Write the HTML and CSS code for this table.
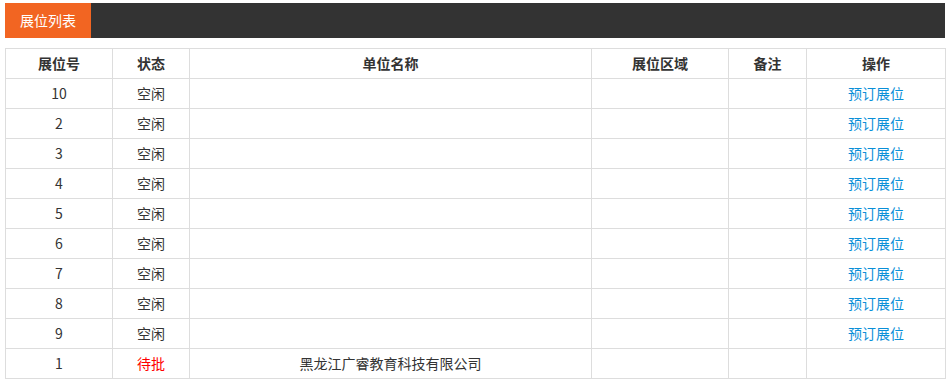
FILE: index.html
```html
<!DOCTYPE html>
<html lang="zh">
<head>
<meta charset="utf-8">
<title>展位列表</title>
<link rel="stylesheet" href="styles.css">
</head>
<body>
<div class="page">
  <div class="titlebar"><span class="tab">展位列表</span></div>
  <table class="booths">
    <colgroup>
      <col class="c1"><col class="c2"><col class="c3"><col class="c4"><col class="c5"><col class="c6">
    </colgroup>
    <thead>
      <tr><th>展位号</th><th>状态</th><th>单位名称</th><th>展位区域</th><th>备注</th><th>操作</th></tr>
    </thead>
    <tbody>
      <tr><td>10</td><td>空闲</td><td></td><td></td><td></td><td><a class="act" href="#">预订展位</a></td></tr>
      <tr><td>2</td><td>空闲</td><td></td><td></td><td></td><td><a class="act" href="#">预订展位</a></td></tr>
      <tr><td>3</td><td>空闲</td><td></td><td></td><td></td><td><a class="act" href="#">预订展位</a></td></tr>
      <tr><td>4</td><td>空闲</td><td></td><td></td><td></td><td><a class="act" href="#">预订展位</a></td></tr>
      <tr><td>5</td><td>空闲</td><td></td><td></td><td></td><td><a class="act" href="#">预订展位</a></td></tr>
      <tr><td>6</td><td>空闲</td><td></td><td></td><td></td><td><a class="act" href="#">预订展位</a></td></tr>
      <tr><td>7</td><td>空闲</td><td></td><td></td><td></td><td><a class="act" href="#">预订展位</a></td></tr>
      <tr><td>8</td><td>空闲</td><td></td><td></td><td></td><td><a class="act" href="#">预订展位</a></td></tr>
      <tr><td>9</td><td>空闲</td><td></td><td></td><td></td><td><a class="act" href="#">预订展位</a></td></tr>
      <tr><td>1</td><td class="pending">待批</td><td>黑龙江广睿教育科技有限公司</td><td></td><td></td><td></td></tr>
    </tbody>
  </table>
</div>
</body>
</html>
```
FILE: styles.css
```css
html, body {
  margin: 0;
  padding: 0;
  background: #fff;
}
body {
  font-family: "Noto Sans CJK SC", "Noto Sans", "Liberation Sans", sans-serif;
  font-size: 14px;
  color: #333;
}
.page {
  padding: 3px 3px 0 5px;
  width: 940px;
}
.titlebar {
  display: flex;
  height: 35px;
  background: #333;
}
.tab {
  display: flex;
  align-items: center;
  justify-content: center;
  width: 86px;
  padding-bottom: 2px;
  box-sizing: border-box;
  background: #f26522;
  color: #fff;
  font-size: 14px;
}
.booths {
  margin-top: 10px;
  width: 940px;
  border-collapse: collapse;
  table-layout: fixed;
}
.c1 { width: 107px; }
.c2 { width: 77px; }
.c3 { width: 402px; }
.c4 { width: 137px; }
.c5 { width: 78px; }
.c6 { width: 139px; }
.booths th, .booths td {
  border: 1px solid #ddd;
  height: 28px;
  padding: 0 0 1px 0;
  text-align: center;
  vertical-align: middle;
  line-height: 20px;
  white-space: nowrap;
}
.booths th {
  font-weight: bold;
  color: #333;
}
.pending {
  color: #f00;
}
.act {
  color: #0a8fd8;
  text-decoration: none;
}
```
